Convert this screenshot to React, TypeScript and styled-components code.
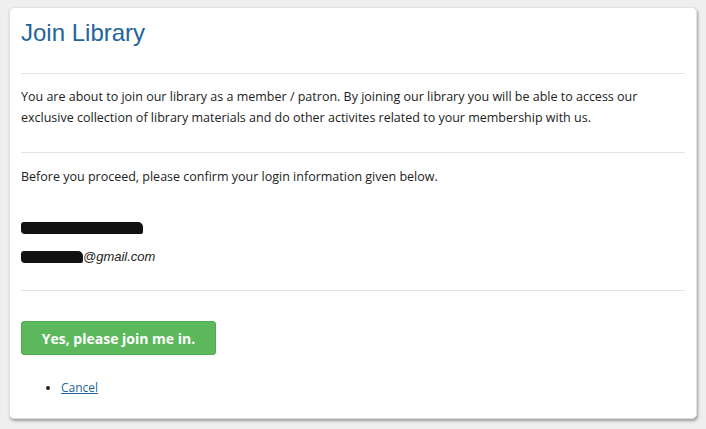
import React from "react";
import styled, { createGlobalStyle } from "styled-components";

const Global = createGlobalStyle`
  html, body { margin: 0; padding: 0; background: #efefef; }
  body { font-family: "Open Sans", "Lato", sans-serif; }
`;

const Page = styled.div`
  padding: 7px 9px 0 9px;
  width: 706px;
  height: 429px;
  box-sizing: border-box;
`;

const Card = styled.div`
  width: 688px;
  height: 412px;
  box-sizing: border-box;
  background: #ffffff;
  border: 1px solid #e2e2e2;
  border-radius: 5px;
  box-shadow: 1px 2px 3px rgba(0, 0, 0, 0.35);
  padding: 0 11px;
  display: flex;
  flex-direction: column;
`;

const Section = styled.div<{ $pt: number; $pb: number; $last?: boolean }>`
  padding-top: ${(p) => p.$pt}px;
  padding-bottom: ${(p) => p.$pb}px;
  border-bottom: ${(p) => (p.$last ? "none" : "1px solid #e3e3e3")};
`;

const Title = styled.h1`
  margin: 0;
  font-family: "Liberation Sans", Arial, sans-serif;
  font-weight: normal;
  font-size: 24px;
  line-height: 28px;
  color: #23649b;
`;

const Text = styled.p`
  margin: 0;
  font-size: 12.5px;
  line-height: 21px;
  color: #222222;
`;

const Redacted = styled.span<{ $w: number }>`
  display: inline-block;
  width: ${(p) => p.$w}px;
  height: 12px;
  vertical-align: -2px;
  background: #111;
  border-radius: 3px 5px 2px 4px;
  filter: blur(0.7px);
`;

const InfoLine = styled.div<{ $italic?: boolean }>`
  font-size: 13px;
  line-height: 29px;
  color: #222;
  font-family: ${(p) => (p.$italic ? '"Liberation Sans", Arial, sans-serif' : "inherit")};
  font-style: ${(p) => (p.$italic ? "italic" : "normal")};
`;

const JoinButton = styled.button`
  width: 195px;
  height: 34px;
  border: 1px solid #4cae4c;
  border-radius: 3px;
  background: #5cb85c;
  color: #ffffff;
  font-family: "Open Sans", "Lato", sans-serif;
  font-weight: bold;
  font-size: 14px;
  cursor: pointer;
  padding: 0;
`;

const List = styled.ul`
  margin: 23px 0 0 0;
  padding-left: 40px;
  font-size: 12px;
  line-height: 20px;
  color: #222;
`;

const Link = styled.a`
  color: #23649b;
  text-decoration: underline;
`;

export default function App() {
  return (
    <>
      <Global />
      <Page>
        <Card>
          <Section $pt={11} $pb={26}>
            <Title>Join Library</Title>
          </Section>
          <Section $pt={12} $pb={24}>
            <Text>
              You are about to join our library as a member / patron. By joining our library you will be able to access our
              exclusive collection of library materials and do other activites related to your membership with us.
            </Text>
          </Section>
          <Section $pt={13} $pb={19}>
            <Text>Before you proceed, please confirm your login information given below.</Text>
            <InfoLine style={{ marginTop: 26 }}>
              <Redacted $w={122} />
            </InfoLine>
            <InfoLine $italic>
              <Redacted $w={62} />@gmail.com
            </InfoLine>
          </Section>
          <Section $pt={30} $pb={0} $last>
            <JoinButton>Yes, please join me in.</JoinButton>
            <List>
              <li>
                <Link href="#">Cancel</Link>
              </li>
            </List>
          </Section>
        </Card>
      </Page>
    </>
  );
}
